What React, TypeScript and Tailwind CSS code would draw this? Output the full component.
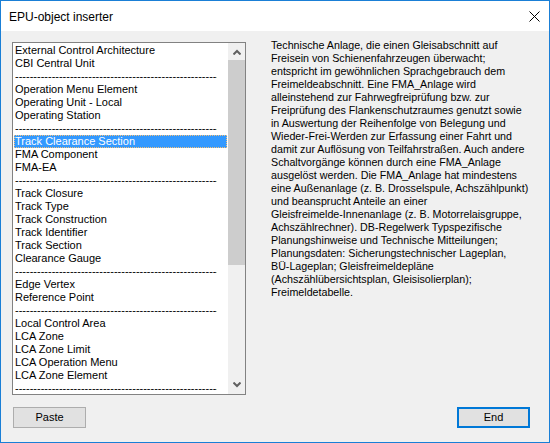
import React from 'react';

const DASHES = '-'.repeat(80);

const ITEMS: string[] = [
  'External Control Architecture',
  'CBI Central Unit',
  DASHES,
  'Operation Menu Element',
  'Operating Unit - Local',
  'Operating Station',
  DASHES,
  'Track Clearance Section',
  'FMA Component',
  'FMA-EA',
  DASHES,
  'Track Closure',
  'Track Type',
  'Track Construction',
  'Track Identifier',
  'Track Section',
  'Clearance Gauge',
  DASHES,
  'Edge Vertex',
  'Reference Point',
  DASHES,
  'Local Control Area',
  'LCA Zone',
  'LCA Zone Limit',
  'LCA Operation Menu',
  'LCA Zone Element',
  DASHES,
];

const SELECTED = 7;

const DESCRIPTION: string[] = [
  'Technische Anlage, die einen Gleisabschnitt auf',
  'Freisein von Schienenfahrzeugen überwacht;',
  'entspricht im gewöhnlichen Sprachgebrauch dem',
  'Freimeldeabschnitt. Eine FMA_Anlage wird',
  'alleinstehend zur Fahrwegfreiprüfung bzw. zur',
  'Freiprüfung des Flankenschutzraumes genutzt sowie',
  'in Auswertung der Reihenfolge von Belegung und',
  'Wieder-Frei-Werden zur Erfassung einer Fahrt und',
  'damit zur Auflösung von Teilfahrstraßen. Auch andere',
  'Schaltvorgänge können durch eine FMA_Anlage',
  'ausgelöst werden. Die FMA_Anlage hat mindestens',
  'eine Außenanlage (z. B. Drosselspule, Achszählpunkt)',
  'und beansprucht Anteile an einer',
  'Gleisfreimelde-Innenanlage (z. B. Motorrelaisgruppe,',
  'Achszählrechner). DB-Regelwerk Typspezifische',
  'Planungshinweise und Technische Mitteilungen;',
  'Planungsdaten: Sicherungstechnischer Lageplan,',
  'BÜ-Lageplan; Gleisfreimeldepläne',
  '(Achszählübersichtsplan, Gleisisolierplan);',
  'Freimeldetabelle.',
];

function Chevron({ up }: { up?: boolean }) {
  return (
    <svg width="8" height="6" viewBox="0 0 8 6" className="block">
      <path
        d={up ? 'M0.5 5.5 L4 2 L7.5 5.5' : 'M0.5 0.5 L4 4 L7.5 0.5'}
        fill="none"
        stroke="#606060"
        strokeWidth="2"
      />
    </svg>
  );
}

export default function App() {
  return (
    <div
      className="w-[550px] h-[443px] border border-[#1a7fd6] bg-[#f0f0f0] flex flex-col overflow-hidden"
      style={{ fontFamily: '"Liberation Sans", Arial, sans-serif' }}
    >
      {/* Title bar */}
      <div className="h-[30px] bg-white flex items-center justify-between pl-[8px] pr-[9px] shrink-0">
        <span className="text-[12px] text-black leading-none pt-[1px]">EPU-object inserter</span>
        <svg width="11" height="11" viewBox="0 0 11 11" className="block mt-[1px]">
          <path d="M0.5 0.5 L10.5 10.5 M10.5 0.5 L0.5 10.5" stroke="#000" strokeWidth="1" />
        </svg>
      </div>

      {/* Client area */}
      <div className="flex flex-col pl-[11px] pt-[8px]">
        <div className="flex items-start">
          {/* List box */}
          <div className="mt-[3px] w-[234px] h-[353px] border border-[#828282] bg-white flex shrink-0 overflow-hidden">
            <div className="w-[215px] pt-[1px] pl-[1px] overflow-hidden">
              {ITEMS.map((item, i) => (
                <div
                  key={i}
                  className={`h-[13px] w-[213px] leading-[13px] text-[11px] whitespace-nowrap overflow-hidden pl-[1px] ${
                    i === SELECTED ? 'bg-[#3399ff] text-white outline outline-1 outline-dotted outline-[#f3c07a] -outline-offset-1' : 'text-black'
                  }`}
                >
                  {item.startsWith('---') ? (
                    <span className="block w-[202px] overflow-hidden">{item}</span>
                  ) : (
                    item
                  )}
                </div>
              ))}
            </div>
            {/* Scrollbar */}
            <div className="w-[17px] h-full bg-[#f0f0f0] flex flex-col">
              <div className="h-[17px] flex items-center justify-center">
                <Chevron up />
              </div>
              <div className="h-[205px] bg-[#cdcdcd]" />
              <div className="flex-1" />
              <div className="h-[17px] flex items-center justify-center mb-[1px]">
                <Chevron />
              </div>
            </div>
          </div>

          {/* Description */}
          <div className="ml-[25px] text-[10.7px] leading-[13px] text-black whitespace-nowrap">
            {DESCRIPTION.map((line, i) => (
              <div key={i}>{line}</div>
            ))}
          </div>
        </div>

        {/* Buttons */}
        <div className="mt-[12px] flex items-start justify-between pr-[19px]">
          <button className="ml-[1px] w-[73px] h-[21px] border border-[#adadad] bg-[#e1e1e1] text-[11px] text-black flex items-center justify-center">
            Paste
          </button>
          <button className="w-[73px] h-[21px] border-2 border-[#0078d7] bg-[#e1e1e1] text-[11px] text-black flex items-center justify-center">
            End
          </button>
        </div>
      </div>
    </div>
  );
}
